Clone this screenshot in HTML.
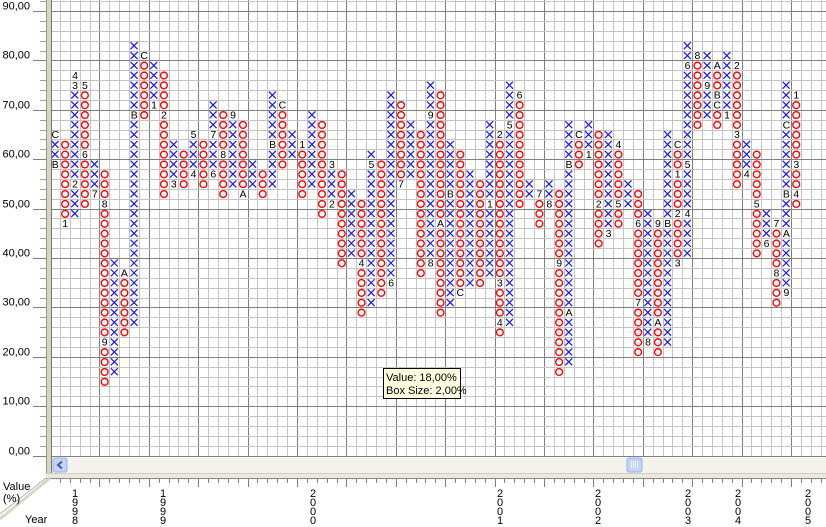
<!DOCTYPE html>
<html><head><meta charset="utf-8"><style>
html,body{margin:0;padding:0;background:#fff;width:826px;height:527px;overflow:hidden}
svg{display:block;font-family:"Liberation Sans",Arial,sans-serif}
</style></head><body>
<svg id="s" width="826" height="527" xmlns="http://www.w3.org/2000/svg">
<rect width="826" height="527" fill="#fff"/>
<g id="grid"></g>
<g id="marks"></g>
<rect x="46" y="0" width="5" height="474" fill="#d8d4c4"/>
<line x1="46.5" y1="0" x2="46.5" y2="474" stroke="#9a9888"/>
<line x1="51.5" y1="0" x2="51.5" y2="474" stroke="#7a7868"/>
<g id="axis" font-size="11" fill="#000"></g>
<rect x="52" y="457" width="774" height="16" fill="#f4f3ee"/>
<line x1="52" y1="457.5" x2="826" y2="457.5" stroke="#fff"/>
<rect x="53" y="458" width="14" height="14" rx="2" fill="#c4d3fb" stroke="#98b0e8"/>
<path d="M62 461.5 L58 465 L62 468.5" fill="none" stroke="#4d6185" stroke-width="2"/>
<rect x="627" y="458" width="15" height="14" rx="2" fill="#c4d3fb" stroke="#98b0e8"/>
<path d="M631.5 461v7M633.5 461v7M635.5 461v7M637.5 461v7" stroke="#eef2ff" stroke-width="1"/>
<rect x="46" y="473" width="780" height="5" fill="#ebe9df"/>
<line x1="46" y1="478.5" x2="826" y2="478.5" stroke="#8c8a7c"/>
<line x1="46" y1="473.5" x2="826" y2="473.5" stroke="#d0cebe"/>
<path d="M46 478 L0 514" stroke="#b8b6a6" stroke-width="1"/>
<path d="M50 478 L0 519" stroke="#d8d6c8" stroke-width="3"/>
<g id="bt"></g>
<text x="3" y="490" font-size="11">Value</text>
<text x="3" y="502" font-size="11">(%)</text>
<text x="25" y="523" font-size="11">Year</text>
<rect x="383.5" y="368.5" width="77" height="30" fill="#ffffe1" stroke="#000"/>
<text x="386" y="381" font-size="11">Value: 18,00%</text>
<text x="386" y="394" font-size="11">Box Size: 2,00%</text>
</svg>
<script>
var NS="http://www.w3.org/2000/svg",C=9.88,X0=50,Y0=11;
function el(p,t,a,txt){var e=document.createElementNS(NS,t);for(var k in a)e.setAttribute(k,a[k]);if(txt!=null)e.textContent=txt;document.getElementById(p).appendChild(e);return e;}
for(var i=0;i<80;i++){var x=X0+C*i;if(x<52||x>826)continue;var maj=(i%5==0);
 el("grid","line",{x1:Math.round(x)+.5,y1:0,x2:Math.round(x)+.5,y2:457,stroke:maj?"#808080":"#c4c4c4"});}
for(var k=-1;k<46;k++){var y=Y0+C*k;if(y<0||y>457)continue;var maj=(k%5==0);
 el("grid","line",{x1:52,y1:Math.round(y)+.5,x2:826,y2:Math.round(y)+.5,stroke:maj?"#808080":"#c4c4c4"});}
for(var k=-1;k<46;k++){var y=Math.round(Y0+C*k)+.5;if(y<0||y>457)continue;
 if(k%5==0){el("axis","line",{x1:33,y1:y,x2:46,y2:y,stroke:"#808080"});
  var v=90-2*k; el("axis","text",{x:30,y:y-2,"text-anchor":"end"},v+",00");}
 else el("axis","line",{x1:40,y1:y,x2:46,y2:y,stroke:"#a0a0a0"});}
for(var i=0;i<80;i++){var x=Math.round(X0+C*i)+.5;if(x<52||x>826)continue;
 el("bt","line",{x1:x,y1:479,x2:x,y2:i%5==0?487:483,stroke:"#808080"});}
var yrs=[[75,"1998"],[163,"1999"],[313,"2000"],[500,"2001"],[598,"2002"],[688,"2003"],[738,"2004"],[808,"2005"]];
yrs.forEach(function(a){for(var j=0;j<4;j++)el("bt","text",{x:a[0],y:497+j*9,"font-size":"11","text-anchor":"middle"},a[1][j]);});
var D=[
[0,"X",13,14,{12:"C",15:"B"}],[1,"O",13,20,{21:"1"}],[2,"X",8,20,{6:"4",7:"3",17:"2"}],[3,"O",8,19,{7:"5",14:"6"}],
[4,"X",15,17,{18:"7"}],[5,"O",16,37,{19:"8",33:"9"}],[6,"X",25,36,{}],[7,"O",27,32,{26:"A"}],
[8,"X",3,31,{10:"B"}],[9,"O",5,10,{4:"C"}],[10,"X",5,8,{9:"1"}],[11,"O",6,18,{10:"2"}],
[12,"X",13,16,{17:"3"}],[13,"O",14,17,{}],[14,"X",13,15,{12:"5",16:"4"}],[15,"O",13,17,{}],
[16,"X",9,15,{12:"7",16:"6"}],[17,"O",10,18,{14:"8"}],[18,"X",11,17,{10:"9"}],[19,"O",11,17,{18:"A"}],
[20,"X",15,17,{}],[21,"O",16,18,{}],[22,"X",8,17,{13:"B"}],[23,"O",10,15,{9:"C"}],
[24,"X",12,14,{}],[25,"O",14,18,{13:"1"}],[26,"X",10,17,{}],[27,"O",11,20,{}],
[28,"X",16,18,{15:"3",19:"2"}],[29,"O",16,25,{}],[30,"X",18,24,{}],[31,"O",19,30,{25:"4"}],
[32,"X",14,29,{15:"5"}],[33,"O",15,28,{}],[34,"X",8,26,{27:"6"}],[35,"O",9,16,{17:"7"}],
[36,"X",11,16,{}],[37,"O",12,26,{}],[38,"X",7,24,{10:"9",25:"8"}],[39,"O",8,30,{21:"A"}],
[40,"X",13,29,{18:"B"}],[41,"O",14,27,{28:"C"}],[42,"X",16,27,{}],[43,"O",17,27,{}],
[44,"X",11,26,{19:"1"}],[45,"O",13,32,{12:"2",27:"3",31:"4"}],[46,"X",7,31,{11:"5"}],[47,"O",9,19,{8:"6"}],
[48,"X",17,18,{}],[49,"O",19,21,{18:"7"}],[50,"X",17,18,{19:"8"}],[51,"O",18,36,{25:"9"}],
[52,"X",11,35,{15:"B",30:"A"}],[53,"O",13,15,{12:"C"}],[54,"X",11,13,{14:"1"}],[55,"O",12,23,{19:"2"}],
[56,"X",12,21,{22:"3"}],[57,"O",14,21,{13:"4",19:"5"}],[58,"X",17,19,{}],[59,"O",18,34,{21:"6",29:"7"}],
[60,"X",20,32,{33:"8"}],[61,"O",22,34,{21:"9",31:"A"}],[62,"X",12,33,{21:"B"}],[63,"O",14,24,{13:"C",16:"1",20:"2",25:"3"}],
[64,"X",3,24,{5:"6",15:"5",20:"4"}],[65,"O",5,11,{4:"8"}],[66,"X",4,10,{7:"9"}],[67,"O",6,11,{5:"A",8:"B",9:"C"}],
[68,"X",4,9,{10:"1"}],[69,"O",6,17,{5:"2",12:"3"}],[70,"X",13,15,{16:"4"}],[71,"O",14,24,{19:"5"}],
[72,"X",20,22,{23:"6"}],[73,"O",22,29,{21:"7",26:"8"}],[74,"X",7,27,{11:"C",18:"B",22:"A",28:"9"}],[75,"O",9,19,{8:"1",15:"3",18:"4"}]
];
D.forEach(function(d){var x=X0+C*d[0];
 for(var k=d[2];k<=d[3];k++){if(d[4][k])continue;var y=Y0+C*k;
  if(d[1]=="X"){el("marks","path",{d:"M"+(x+1.5)+" "+(y+1.5)+"L"+(x+8.5)+" "+(y+8.5)+"M"+(x+8.5)+" "+(y+1.5)+"L"+(x+1.5)+" "+(y+8.5),stroke:"#1414ff","stroke-width":"1.2",fill:"none"});}
  else el("marks","circle",{cx:x+C/2+.3,cy:y+C/2+.3,r:3.4,fill:"none",stroke:"#ff0000","stroke-width":"1.4"});}
 for(var k in d[4]){var y=Y0+C*k;el("marks","text",{x:x+C/2+.3,y:y+8.6,"font-size":"10.5","text-anchor":"middle",fill:"#000"},d[4][k]);}
});
</script>
</body></html>
